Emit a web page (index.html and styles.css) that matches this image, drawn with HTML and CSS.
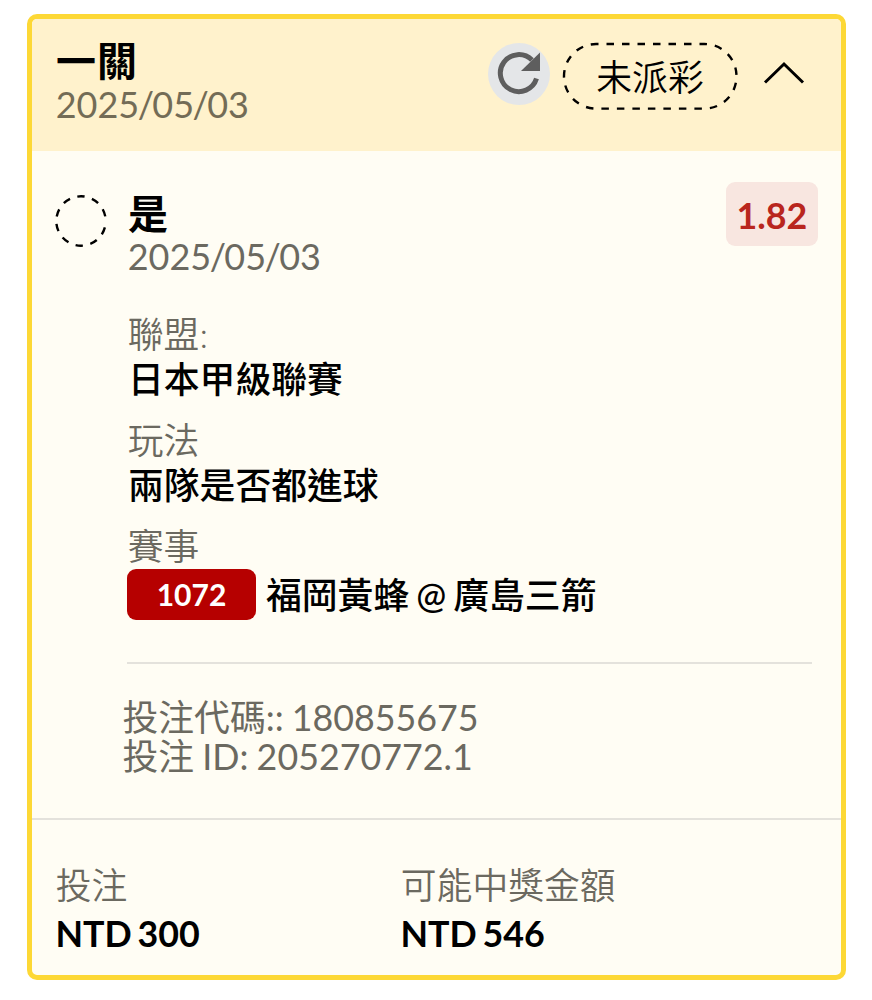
FILE: index.html
```
<!DOCTYPE html>
<html lang="zh-Hant">
<head>
  <meta charset="UTF-8" />
  <meta name="viewport" content="width=device-width, initial-scale=1.0"/>
  <title>投注紀錄</title>
  <link rel="stylesheet" href="styles.css">
</head>
<body>

  <div class="ticket">
    <div class="ticket-header">
      <div class="ticket-title">
        <h1>一關</h1>
        <p class="date">2025<span>/</span>05<span>/</span>03</p>
      </div>
      <svg class="refresh" viewBox="0 0 62 62">
        <circle cx="31" cy="31" r="31" fill="#e4e6e8"/>
        <path d="M48.5 35.6A18.5 18.5 0 1 1 44 17.1" fill="none" stroke="#5e5e5e" stroke-width="5"/>
        <path d="M52 9.6V28H33z" fill="#5e5e5e"/>
      </svg>
      <div class="status">
        <svg class="status-outline" viewBox="0 0 176 68">
          <rect x="2" y="2" width="172.5" height="64.6" rx="32.1"/>
        </svg>
        <span>未派彩</span>
      </div>
      <svg class="chevron" viewBox="0 0 42 24">
        <path d="M2 21.5L21 3L40 21.5"/>
      </svg>
    </div>

    <div class="ticket-body">
      <svg class="pending" viewBox="0 0 52 52">
        <circle cx="26" cy="26" r="24.7"/>
      </svg>

      <div class="bet">
        <div class="bet-top">
          <div>
            <h2>是</h2>
            <p class="date">2025<span>/</span>05<span>/</span>03</p>
          </div>
          <span class="odds">1.82</span>
        </div>

        <dl class="fields">
          <dt>聯盟:</dt>
          <dd>日本甲級聯賽</dd>
          <dt>玩法</dt>
          <dd>兩隊是否都進球</dd>
          <dt>賽事</dt>
          <dd class="match"><span class="match-no">1072</span><span class="teams">福岡黃蜂 @ 廣島三箭</span></dd>
        </dl>

        <div class="codes">
          <p>投注代碼:: 180855675</p>
          <p>投注 ID: 205270772.1</p>
        </div>
      </div>
    </div>

    <div class="ticket-footer">
      <div class="amount">
        <p class="label">投注</p>
        <p class="value">NTD 300</p>
      </div>
      <div class="amount">
        <p class="label">可能中獎金額</p>
        <p class="value">NTD 546</p>
      </div>
    </div>
  </div>

</body>
</html>
```
FILE: styles.css
```
/* ---------------- GENERAL ---------------- */
* {
  box-sizing: border-box;
}

body {
  margin: 0;
  padding: 14px 26px 20px 27px;
  background: #fff;
  color: #000;
  font-family: Lato, "Noto Sans CJK TC", sans-serif;
  font-size: 35.8px;
}

h1, h2, p, dl, dd {
  margin: 0;
}

h1, h2 {
  font-size: 40px;
  line-height: 42px;
  font-weight: 700;
  text-indent: 1px;
}

h1 {
  line-height: 43px;
  letter-spacing: 1px;
}

.ticket {
  height: 966px;
  border: 5px solid #fdd835;
  border-radius: 10px;
  background: #fffdf4;
  overflow: hidden;
}

.date {
  font-size: 36px;
  line-height: 42px;
  color: #6b6960;
  text-indent: 0.7px;
}

.date span {
  margin: 0 -1.6px;
}

/* ---------------- HEADER ---------------- */
.ticket-header {
  display: flex;
  align-items: flex-start;
  height: 132px;
  padding: 21px 36px 0 23px;
  background: #fff2cc;
}

.ticket-title {
  flex: 1;
}

.ticket-title .date {
  color: #736c56;
}

.refresh {
  width: 62px;
  height: 62px;
  margin: 3px 12px 0 0;
}

.status {
  position: relative;
  width: 176px;
  height: 68px;
  margin: 2px 25px 0 0;
  font-weight: 350;
  text-align: center;
  line-height: 71px;
}

.status-outline {
  position: absolute;
  top: 0;
  left: 0;
  width: 176px;
  height: 68px;
}

.status-outline rect,
.pending circle {
  fill: none;
  stroke: #000;
  stroke-width: 2.4;
}

.status-outline rect {
  stroke-dasharray: 7.5 8;
  stroke-dashoffset: -10.4;
}

.chevron {
  width: 42px;
  height: 24px;
  margin-top: 21px;
  fill: none;
  stroke: #000;
  stroke-width: 3;
}

/* ---------------- BODY ---------------- */
.ticket-body {
  display: flex;
  gap: 20px;
  height: 669px;
  padding: 31px 23px 0;
  border-bottom: 2px solid #e4e2dc;
}

.pending {
  flex: none;
  width: 52px;
  height: 52px;
  margin-top: 13px;
}

.pending circle {
  stroke-dasharray: 7.5 7.55;
  stroke-dashoffset: -6.5;
}

.bet {
  flex: 1;
}

.bet-top {
  display: flex;
  justify-content: space-between;
  height: 131px;
  padding-top: 11px;
}

.odds {
  width: 92px;
  height: 64px;
  margin-top: -11px;
  border-radius: 9px;
  background: #f8e6e0;
  color: #b9261e;
  font-weight: 700;
  text-align: center;
  line-height: 67px;
}

.fields {
  height: 351px;
  margin-right: 6px;
  border-bottom: 2px solid #e4e2dc;
}

.fields dt,
.label {
  color: #6b6960;
  font-weight: 350;
  line-height: 44px;
  text-indent: 0.8px;
}

.fields dd {
  margin-bottom: 17px;
  font-weight: 500;
  line-height: 45px;
  text-indent: 1px;
}

.fields .match {
  display: flex;
  align-items: center;
  gap: 10px;
  text-indent: 0;
}

.match-no {
  width: 129px;
  height: 51px;
  border-radius: 9px;
  background: #b60000;
  color: #fff;
  font-size: 30px;
  font-weight: 700;
  text-align: center;
  line-height: 51px;
}

.teams {
  padding-top: 2px;
  word-spacing: -2px;
}

.codes {
  margin: 34px 0 0 -4.5px;
  color: #6b6960;
  line-height: 39px;
  word-spacing: -1px;
}

/* ---------------- FOOTER ---------------- */
.ticket-footer {
  display: grid;
  grid-template-columns: 345px 1fr;
  padding: 44px 23px 0;
}

.value {
  font-weight: 700;
  line-height: 52px;
  word-spacing: -3px;
  text-indent: 0.5px;
}
```
